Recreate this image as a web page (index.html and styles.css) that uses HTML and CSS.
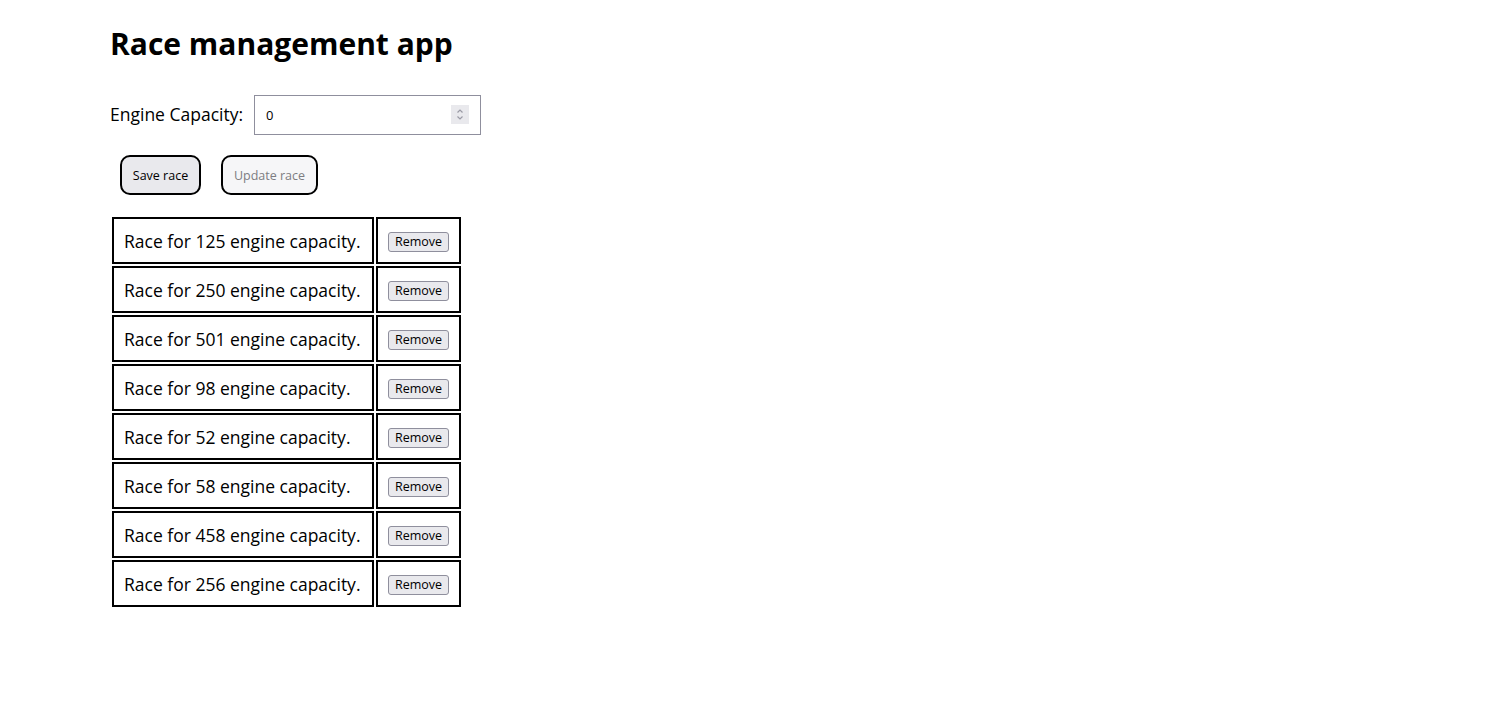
FILE: index.html
```html
<!DOCTYPE html>
<html>
<head>
<meta charset="utf-8">
<link rel="stylesheet" href="styles.css">
</head>
<body>
<div class="app">
  <h1 class="title">Race management app</h1>
  <div class="field">
    <label class="field-label" for="cap">Engine Capacity:</label>
    <div class="input-wrap">
      <input class="num-input" id="cap" type="text" value="0">
      <span class="spinner">
        <svg width="18" height="19" viewBox="0 0 18 19"><rect width="18" height="19" fill="#e9e9ed"/><path d="M6.5 7.5 L9 5 L11.5 7.5" fill="none" stroke="#9a9aa5" stroke-width="1.2"/><path d="M6.5 11.5 L9 14 L11.5 11.5" fill="none" stroke="#9a9aa5" stroke-width="1.2"/></svg>
      </span>
    </div>
  </div>
  <div class="actions">
    <button class="btn btn-save">Save race</button>
    <button class="btn btn-update" disabled>Update race</button>
  </div>
  <table class="races">
    <tbody>
      <tr><td class="race-name">Race for 125 engine capacity.</td><td class="race-act"><button class="remove">Remove</button></td></tr>
      <tr><td class="race-name">Race for 250 engine capacity.</td><td class="race-act"><button class="remove">Remove</button></td></tr>
      <tr><td class="race-name">Race for 501 engine capacity.</td><td class="race-act"><button class="remove">Remove</button></td></tr>
      <tr><td class="race-name">Race for 98 engine capacity.</td><td class="race-act"><button class="remove">Remove</button></td></tr>
      <tr><td class="race-name">Race for 52 engine capacity.</td><td class="race-act"><button class="remove">Remove</button></td></tr>
      <tr><td class="race-name">Race for 58 engine capacity.</td><td class="race-act"><button class="remove">Remove</button></td></tr>
      <tr><td class="race-name">Race for 458 engine capacity.</td><td class="race-act"><button class="remove">Remove</button></td></tr>
      <tr><td class="race-name">Race for 256 engine capacity.</td><td class="race-act"><button class="remove">Remove</button></td></tr>
    </tbody>
  </table>
</div>
</body>
</html>
```
FILE: styles.css
```css
html, body {
  margin: 0;
  padding: 0;
  background: #ffffff;
}
body {
  font-family: "Open Sans", "Noto Sans", sans-serif;
  color: #000;
}
.app {
  padding: 24px 110px 0 110px;
}
.title {
  margin: 0;
  font-size: 30px;
  line-height: 40px;
  font-weight: 700;
  white-space: nowrap;
}
.field {
  display: flex;
  align-items: center;
  margin-top: 31px;
  gap: 11px;
}
.field-label {
  font-size: 17.5px;
  white-space: nowrap;
  position: relative;
  top: -1px;
}
.input-wrap {
  position: relative;
  width: 227px;
  height: 40px;
}
.num-input {
  box-sizing: border-box;
  width: 227px;
  height: 40px;
  border: 1px solid #8f8f9d;
  border-radius: 0;
  padding: 0 11px;
  font-family: "Open Sans", "Noto Sans", sans-serif;
  font-size: 13px;
  color: #000;
  outline: none;
}
.spinner {
  position: absolute;
  left: 197px;
  top: 10px;
  width: 18px;
  height: 19px;
  display: block;
}
.spinner svg { display: block; }
.actions {
  display: flex;
  gap: 20px;
  margin-top: 20px;
  padding-left: 10px;
}
.btn {
  box-sizing: border-box;
  height: 40px;
  border: 2px solid #000;
  border-radius: 10px;
  padding: 0;
  font-family: "Open Sans", "Noto Sans", sans-serif;
  font-size: 12.5px;
  white-space: nowrap;
}
.btn-save {
  width: 81px;
  background: #e9e9ed;
  color: #000;
}
.btn-update {
  width: 97px;
  background: #f6f6f8;
  color: #7d7d82;
}
.races {
  margin-top: 20px;
  border-collapse: separate;
  border-spacing: 2px;
  margin-left: 0;
}
.races td {
  border: 2px solid #000;
  padding: 0 10px;
  height: 47px;
  box-sizing: border-box;
  font-size: 17.5px;
  line-height: 22px;
  white-space: nowrap;
}
.race-name {
  width: 262px;
}
.race-act {
  width: 85px;
  text-align: center;
}
.remove {
  box-sizing: border-box;
  width: 61px;
  height: 20px;
  padding: 0;
  border: 1px solid #8f8f9d;
  border-radius: 3px;
  background: #e9e9ed;
  font-family: "Open Sans", "Noto Sans", sans-serif;
  font-size: 12.5px;
  color: #000;
  line-height: 18px;
  vertical-align: middle;
}
```
